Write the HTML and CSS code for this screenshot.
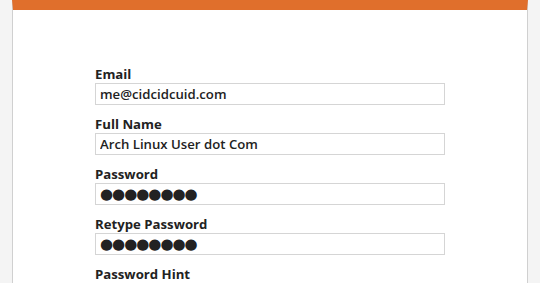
FILE: index.html
```html
<!DOCTYPE html>
<html lang="en">
<head>
    <meta charset="UTF-8">
    <title>Create Account</title>
    <link rel="stylesheet" href="styles.css">
</head>
<body>

    <div class="page">
        <div class="card">
            <form class="signup">
                <div class="field">
                    <label class="fieldName" for="email">Email</label>
                    <input type="text" id="email" name="email" value="me@cidcidcuid.com">
                </div>
                <div class="field">
                    <label class="fieldName" for="fullname">Full Name</label>
                    <input type="text" id="fullname" name="fullname" value="Arch Linux User dot Com">
                </div>
                <div class="field">
                    <label class="fieldName" for="password">Password</label>
                    <input type="text" class="dots" id="password" name="password" value="●●●●●●●●">
                </div>
                <div class="field">
                    <label class="fieldName" for="password2">Retype Password</label>
                    <input type="text" class="dots" id="password2" name="password2" value="●●●●●●●●">
                </div>
                <div class="field">
                    <label class="fieldName" for="hint">Password Hint</label>
                    <input type="text" id="hint" name="hint" value="">
                </div>
            </form>
        </div>
    </div>

</body>
</html>
```

FILE: styles.css
```css
html {
    margin: 0;
    padding: 0;
}

body {
    margin: 0;
    padding: 0;
    background-color: #f4f4f4;
    font-family: "Open Sans", sans-serif;
    color: #222;
    overflow: hidden;
}

.page {
    padding: 0 12px;
}

.card {
    background-color: #fff;
    border-top: 10px solid #e06f2c;
    border-left: 1px solid #d0d0d0;
    border-right: 1px solid #d0d0d0;
    padding: 56px 0 40px 82px;
    min-height: 400px;
}

.signup {
    width: 350px;
}

.field {
    margin-bottom: 11px;
}

.fieldName {
    display: block;
    font-size: 13.2px;
    font-weight: 700;
    line-height: 17px;
}

input {
    display: block;
    box-sizing: border-box;
    width: 350px;
    height: 22px;
    margin: 0;
    padding: 0 4px;
    border: 1px solid #d5d5d5;
    border-radius: 0;
    outline: none;
    font-family: "Open Sans", sans-serif;
    font-size: 13.2px;
    font-weight: 600;
    color: #222;
}

.dots {
    font-family: "DejaVu Sans", sans-serif;
    font-size: 15px;
    letter-spacing: -1px;
}
```
